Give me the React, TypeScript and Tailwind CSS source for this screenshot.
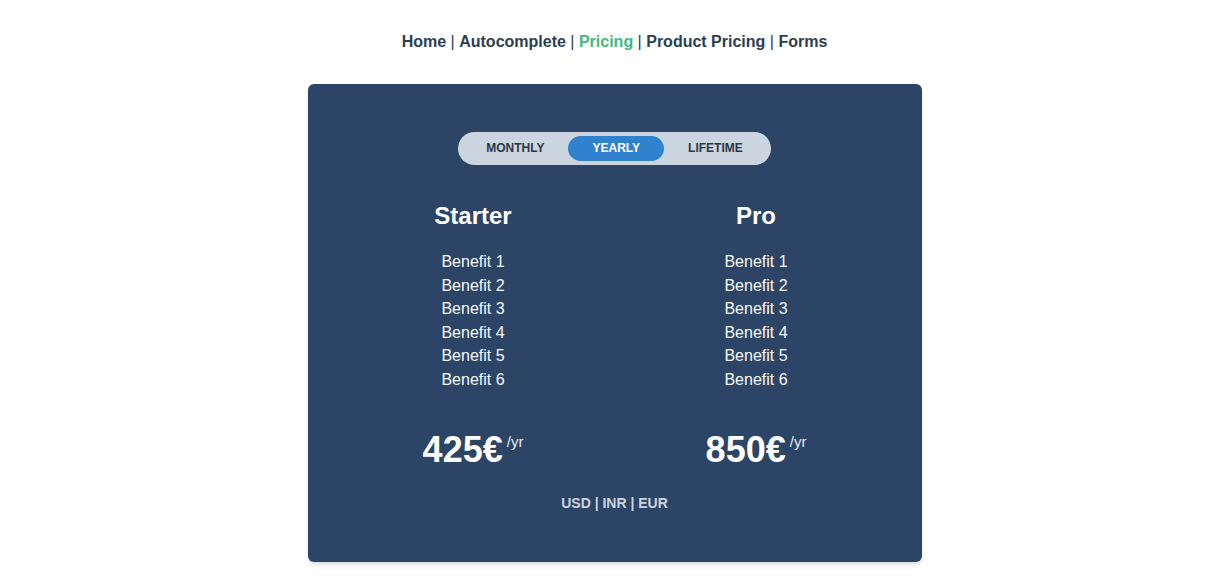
import { useState } from "react"

const plans = [
  { name: "Starter", price: 425 },
  { name: "Pro", price: 850 },
]

const benefits = ["Benefit 1", "Benefit 2", "Benefit 3", "Benefit 4", "Benefit 5", "Benefit 6"]

const periods = ["MONTHLY", "YEARLY", "LIFETIME"]

export default function App() {
  const [period, setPeriod] = useState("YEARLY")

  return (
    <div className="min-h-screen bg-white text-[#2c3e50] font-['Liberation_Sans',Arial,sans-serif]">
      {/* Nav */}
      <nav className="pt-[33px] text-center text-base leading-[18px]">
        <a className="font-bold">Home</a>
        <span> | </span>
        <a className="font-bold">Autocomplete</a>
        <span> | </span>
        <a className="font-bold text-[#42b983]">Pricing</a>
        <span> | </span>
        <a className="font-bold">Product Pricing</a>
        <span> | </span>
        <a className="font-bold">Forms</a>
      </nav>

      {/* Card */}
      <div className="mx-auto mt-[33px] w-[614px] rounded-md bg-[#2c4465] px-6 pt-12 pb-[49px] shadow-md">
        <div className="flex justify-center">
          <div className="flex rounded-full bg-[#cbd5e0] p-1">
            {periods.map(p => (
              <button
                key={p}
                onClick={() => setPeriod(p)}
                className={
                  p === period
                    ? "h-[25px] rounded-full bg-[#3182ce] px-6 pb-px text-xs font-bold text-white"
                    : "h-[25px] rounded-full px-6 pb-px text-xs font-bold text-[#2d3748]"
                }
              >
                {p}
              </button>
            ))}
          </div>
        </div>

        <div className="mt-[35px] grid grid-cols-2">
          {plans.map(plan => (
            <div key={plan.name} className="flex flex-col items-center">
              <h2 className="text-2xl font-bold leading-8 text-white">{plan.name}</h2>
              <ul className="mt-[18px] text-center text-base leading-[23.6px] text-[#f7fafc]">
                {benefits.map(b => (
                  <li key={b}>{b}</li>
                ))}
              </ul>
              <div className="mt-[38px] flex items-start">
                <span className="text-4xl font-bold leading-10 text-white">{plan.price}€</span>
                <span className="ml-1 mt-[2px] text-[15px] leading-5 text-[#e2e8f0]">/yr</span>
              </div>
            </div>
          ))}
        </div>

        <p className="mt-[23px] text-center text-sm font-bold leading-5 text-[#cbd5e0]">USD | INR | EUR</p>
      </div>
    </div>
  )
}
